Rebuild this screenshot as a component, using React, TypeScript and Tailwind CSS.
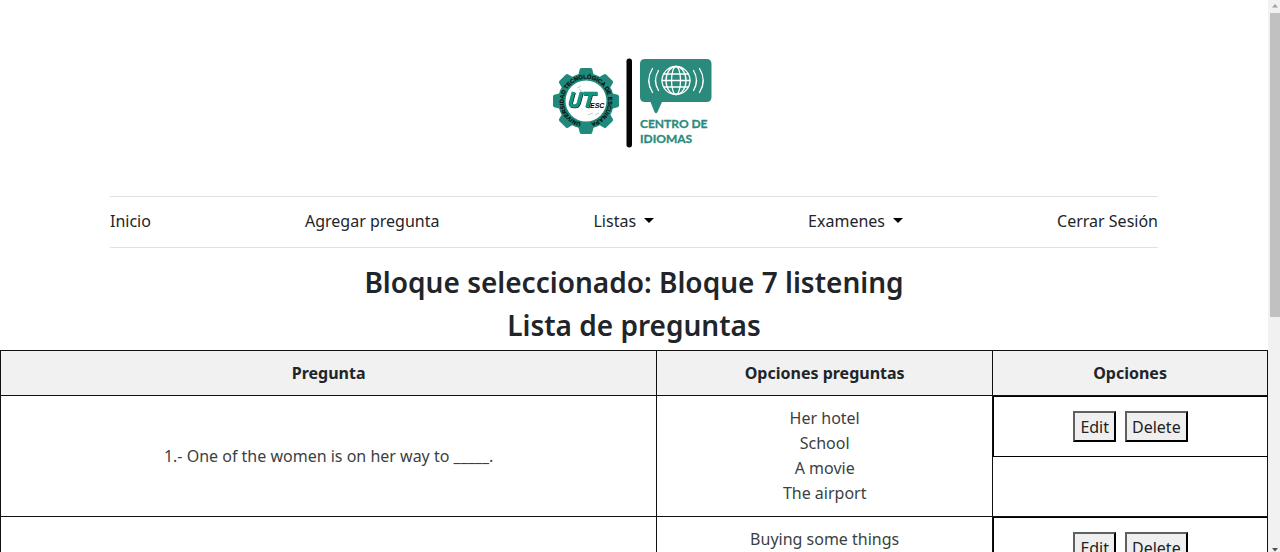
type Question = { text: string; options: string[] };

const questions: Question[] = [
  {
    text: "1.- One of the women is on her way to _____.",
    options: ["Her hotel", "School", "A movie", "The airport"],
  },
  {
    text: "",
    options: ["Buying some things"],
  },
];

const teeth = [0, 45, 90, 135, 180, 225, 270, 315];

function Logo() {
  return (
    <svg
      viewBox="0 0 168 96"
      className="h-24 w-42"
      role="img"
      aria-label="UTESC Centro de Idiomas"
    >
      <g transform="translate(36 47)">
        <g fill="#21897b">
          <circle r="28" />
          {teeth.map((a) => (
            <path
              key={a}
              transform={`rotate(${a})`}
              d="M-8 -25 L-6.200 -31.800 Q-5.800 -33 -4.500 -33 H4.500 Q5.800 -33 6.200 -31.800 L8 -25 Z"
            />
          ))}
        </g>
        <circle r="20.500" fill="#fff" />
        <defs>
          <path id="ring" d="M-5 21.700 A22.300 22.300 0 1 1 5 21.700" />
        </defs>
        <text
          fontSize="5.8"
          className="font-['Liberation_Sans',sans-serif] font-bold"
          fill="#06110f"
          stroke="#06110f"
          strokeWidth="0.2"
        >
          <textPath href="#ring" startOffset="50%" textAnchor="middle">
            UNIVERSIDAD TECNOLÓGICA DE ESCUINAPA
          </textPath>
        </text>
        <path
          d="M-9 -13 L-5 -15 M-7 -12 L-2 -8 M2 14 L7 12 M9 14 L13 12"
          stroke="#c3ccca"
          strokeWidth="1"
          fill="none"
        />
        <g fill="none" stroke="#0c2420" strokeWidth="3.6" transform="translate(0.6 0.5)">
          <path d="M-12.500 -9 L-15.500 2 Q-16 5 -13 5 H-11 Q-8.500 5 -7.500 2 L-4.500 -9" />
          <path d="M-2.500 -7.500 H11" />
          <path d="M5 -8 L1 6.600" />
        </g>
        <g fill="none" stroke="#159581" strokeWidth="3.6">
          <path d="M-12.500 -9 L-15.500 2 Q-16 5 -13 5 H-11 Q-8.500 5 -7.500 2 L-4.500 -9" />
          <path d="M-2.500 -7.500 H11" />
          <path d="M5 -8 L1 6.600" />
        </g>
        <text
          x="4"
          y="7"
          fontSize="7"
          className="font-['Liberation_Sans',sans-serif] font-bold italic"
          fill="#000"
        >
          ESC
        </text>
      </g>
      <rect x="76.5" y="4.5" width="5.5" height="89" rx="2.7" fill="#050505" />
      <path
        d="M95 5 H156.500 Q161.500 5 161.500 10 V43 Q161.500 48 156.500 48 H112 L107.500 58 Q106 60.500 104.500 58 L100.500 48 H95 Q90 48 90 43 V10 Q90 5 95 5 Z"
        fill="#2a8b7c"
      />
      <g fill="none" stroke="#fff" strokeWidth="1.3" strokeLinecap="round">
        <circle cx="126" cy="26.500" r="14" />
        <ellipse cx="126" cy="26.500" rx="4.500" ry="14" />
        <ellipse cx="126" cy="26.500" rx="10" ry="14" />
        <path d="M114 20 H138 M112 26.500 H140 M114 33 H138" />
        <path d="M108.500 16.500 Q102.500 26.500 108.500 36.500 M143.500 16.500 Q149.500 26.500 143.500 36.500" />
        <path d="M102.500 14.500 Q95 26.500 102.500 38.500 M149.500 14.500 Q157 26.500 149.500 38.500" />
      </g>
      <g
        fill="#2a8b7c"
        fontSize="12"
        className="font-['Lato',sans-serif] font-bold"
        stroke="#2a8b7c"
        strokeWidth="0.3"
      >
        <text x="90" y="74">CENTRO DE</text>
        <text x="90" y="89">IDIOMAS</text>
      </g>
    </svg>
  );
}

function Caret() {
  return (
    <svg viewBox="0 0 10 5" className="mb-0.5 h-[5px] w-[10px]" aria-hidden="true">
      <path d="M0 0 H10 L5 5 Z" fill="#000" />
    </svg>
  );
}

function ActionButton({ children }: { children: string }) {
  return (
    <button
      type="button"
      className="h-[31px] border-2 border-t-[#606060] border-r-black border-b-black border-l-[#606060] bg-[#efefef] px-[5px] leading-6 text-[#222]"
    >
      {children}
    </button>
  );
}

export default function App() {
  return (
    <div className="flex h-screen overflow-hidden bg-white font-['Noto_Sans','Open_Sans',sans-serif] text-base text-[#212529]">
      <div className="min-w-0 flex-1 overflow-hidden">
        <header className="flex justify-center pt-[54px] pb-[46px]">
          <Logo />
        </header>

        <nav className="mx-[110px] flex h-[52px] items-center justify-between border-y border-[#dee2e6] pb-0.5">
          <a href="#inicio">Inicio</a>
          <a href="#agregar">Agregar pregunta</a>
          <button type="button" className="flex items-center gap-2">
            Listas <Caret />
          </button>
          <button type="button" className="flex items-center gap-2">
            Examenes <Caret />
          </button>
          <a href="#salir">Cerrar Sesión</a>
        </nav>

        <main>
          <div className="pt-[13px] pb-[3px] text-center text-[28px] leading-[43px] font-semibold">
            <h1>Bloque seleccionado: Bloque 7 listening</h1>
            <h2>Lista de preguntas</h2>
          </div>

          <table className="w-full table-fixed border-collapse text-center">
            <colgroup>
              <col className="w-[51.8%]" />
              <col className="w-[26.5%]" />
              <col />
            </colgroup>
            <thead className="bg-[#f1f1f1]">
              <tr className="h-[45px]">
                <th className="border border-[#111]">Pregunta</th>
                <th className="border border-[#111]">Opciones preguntas</th>
                <th className="border border-[#111]">Opciones</th>
              </tr>
            </thead>
            <tbody className="text-[#3b3f43]">
              {questions.map((q, i) => (
                <tr key={i} className="h-[121px]">
                  <td className="border border-[#111] p-2">{q.text}</td>
                  <td className="border border-[#111] px-2 py-[10px] align-top">
                    {q.options.map((o) => (
                      <p key={o} className="leading-[25px]">
                        {o}
                      </p>
                    ))}
                  </td>
                  <td className="border border-[#111] p-0 align-top">
                    <div className="flex h-[61px] items-center justify-center gap-[9px] border-t border-b border-l border-black">
                      <ActionButton>Edit</ActionButton>
                      <ActionButton>Delete</ActionButton>
                    </div>
                  </td>
                </tr>
              ))}
            </tbody>
          </table>
        </main>
      </div>

      <div className="flex w-3 flex-col items-center bg-[#f1f1f1]" aria-hidden="true">
        <svg viewBox="0 0 12 13" className="h-[13px] w-3 shrink-0">
          <path d="M4 7.500 L7 4 L10 7.500 Z" fill="#a0a0a0" />
        </svg>
        <div className="ml-0.5 h-[55%] w-[10px] bg-[#c1c1c1]" />
        <svg viewBox="0 0 12 6" className="mt-auto h-1.5 w-3 shrink-0">
          <path d="M4 2 H10 L7 5.500 Z" fill="#505050" />
        </svg>
      </div>
    </div>
  );
}
